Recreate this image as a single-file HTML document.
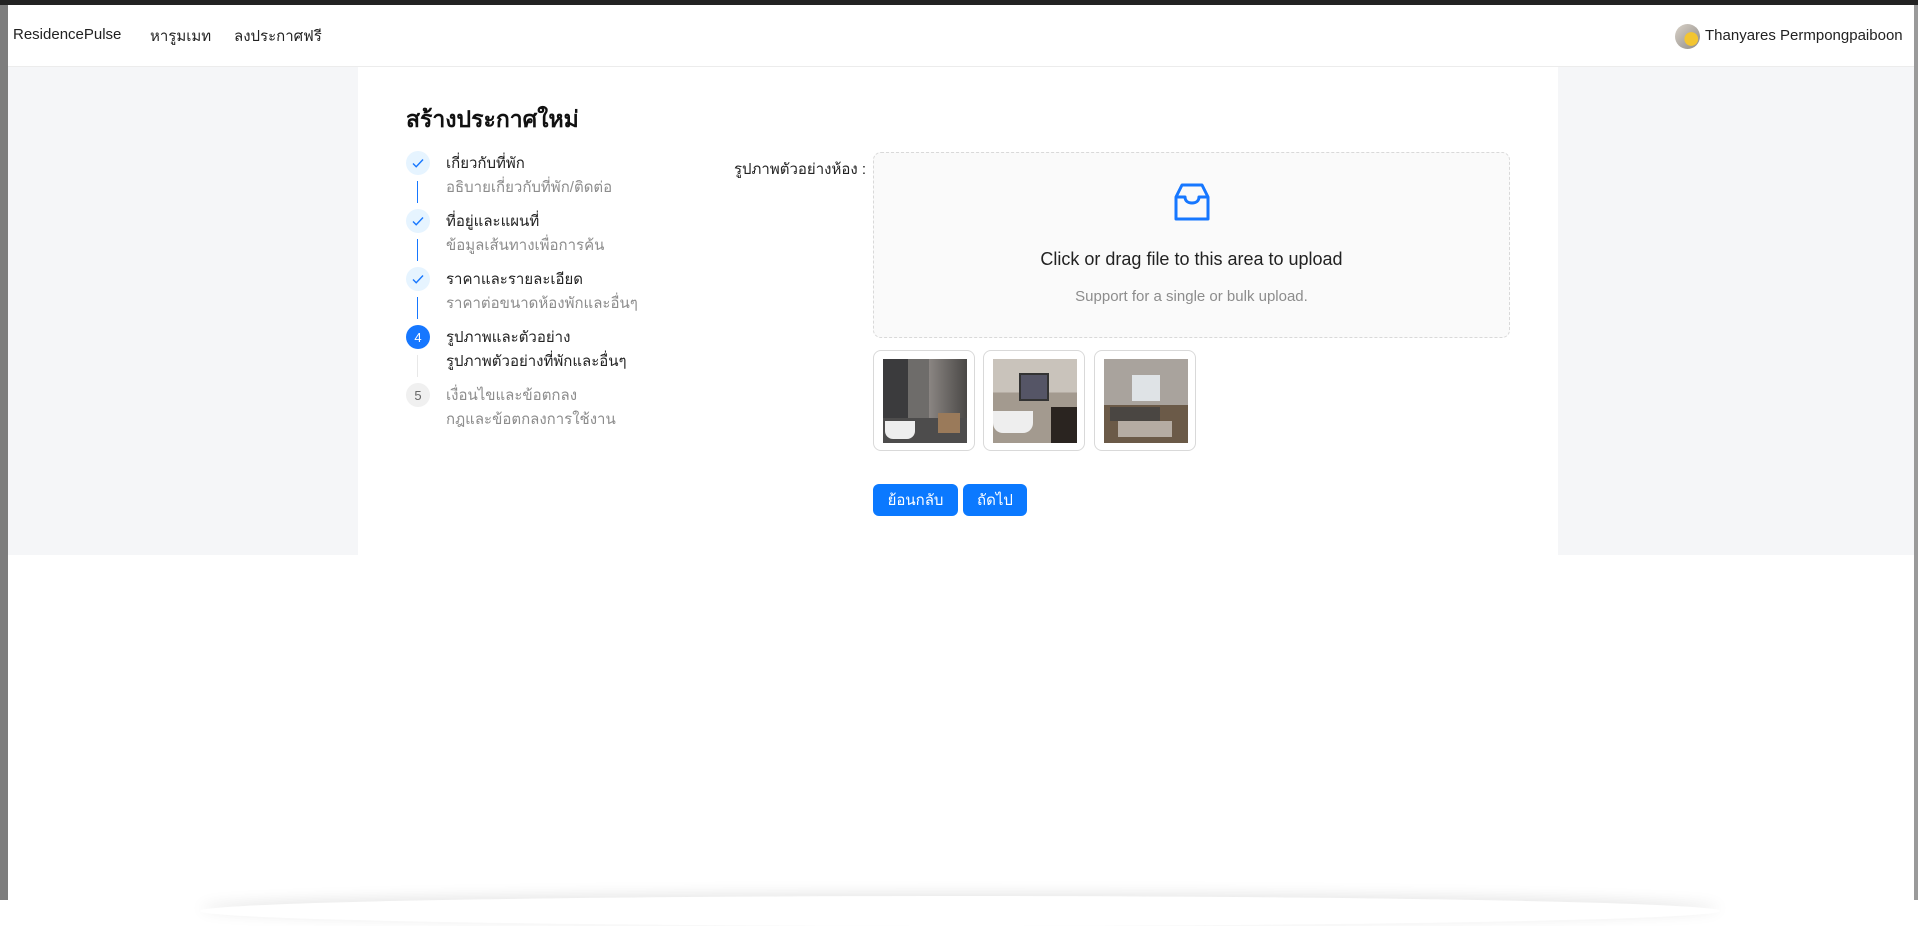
<!DOCTYPE html>
<html><head><meta charset="utf-8">
<style>
*{margin:0;padding:0;box-sizing:border-box}
html,body{width:1918px;height:900px;overflow:hidden;background:#fff;font-family:"Liberation Sans","DejaVu Sans",sans-serif;color:#222}
.topbar{position:absolute;left:0;top:0;width:1918px;height:5px;background:#222}
.lstrip{position:absolute;left:0;top:5px;width:8px;height:895px;background:#7d7d7d}
.rstrip{position:absolute;right:0;top:5px;width:4px;height:895px;background:#9a9a9a}
.header{position:absolute;left:8px;top:5px;right:4px;height:62px;background:#fff;border-bottom:1px solid #ececec}
.header span{position:absolute;top:22px;font-size:15px;color:#222}
.gray{position:absolute;left:8px;right:4px;top:67px;height:488px;background:#f5f6f8}
.panel{position:absolute;left:358px;top:67px;width:1200px;height:488px;background:#fff}
.title{position:absolute;left:406px;top:102px;font-size:23px;font-weight:bold;color:#111}
.step{position:absolute;left:406px}
.circ{position:absolute;left:0;top:0;width:24px;height:24px;border-radius:50%;display:flex;align-items:center;justify-content:center;font-size:13px}
.st{position:absolute;left:40px;top:0px;font-size:15px;white-space:nowrap;color:#222}
.ss{position:absolute;left:40px;top:24px;font-size:15px;white-space:nowrap;color:#8c8c8c}
.line{position:absolute;left:11px;top:30px;width:1px;height:22px;background:#1677ff}
.label{position:absolute;right:1052px;top:157px;font-size:15px;color:#222;white-space:nowrap}
.drop{position:absolute;left:873px;top:152px;width:637px;height:186px;background:#fafafa;border:1px dashed #d9d9d9;border-radius:8px;text-align:center}
.drop .t1{position:absolute;left:0;right:0;top:96px;font-size:18px;color:#222}
.drop .t2{position:absolute;left:0;right:0;top:135px;font-size:15px;color:#8c8c8c}
.thumb{position:absolute;top:350px;width:102px;height:101px;border:1px solid #d9d9d9;border-radius:8px;background:#fff}
.img{position:absolute;left:9px;top:8px;width:84px;height:84px;overflow:hidden}
.btn{position:absolute;top:484px;height:32px;background:#0b79ff;color:#fff;border-radius:6px;font-size:15px;display:flex;align-items:center;justify-content:center}
.shadow{position:absolute;left:200px;top:896px;width:1520px;height:30px;border-radius:50%;box-shadow:0 -3px 14px rgba(0,0,0,.10)}
</style></head><body>
<div class="topbar"></div>
<div class="header">
<span style="left:5px;top:21px">ResidencePulse</span>
<span style="left:142px;top:19px">หารูมเมท</span>
<span style="left:226px;top:19px">ลงประกาศฟรี</span>
<div style="position:absolute;left:1667px;top:19px;width:25px;height:25px;border-radius:50%;background:radial-gradient(circle at 65% 60%,#f3c531 0 30%,transparent 32%),linear-gradient(135deg,#d9d2c8,#8e8a86)"></div>
<span style="left:1697px;top:22px;font-size:15px">Thanyares Permpongpaiboon</span>
</div>
<div class="lstrip"></div><div class="rstrip"></div>
<div class="gray"></div>
<div class="panel"></div>
<div class="title">สร้างประกาศใหม่</div>

<div class="step" style="top:151px"><div class="circ" style="background:#e6f4ff"><svg width="14" height="14" viewBox="0 0 14 14"><path d="M2 7.5l3.2 3.2L12 3.5" fill="none" stroke="#1677ff" stroke-width="1.4"/></svg></div><div class="line"></div><div class="st">เกี่ยวกับที่พัก</div><div class="ss">อธิบายเกี่ยวกับที่พัก/ติดต่อ</div></div>
<div class="step" style="top:209px"><div class="circ" style="background:#e6f4ff"><svg width="14" height="14" viewBox="0 0 14 14"><path d="M2 7.5l3.2 3.2L12 3.5" fill="none" stroke="#1677ff" stroke-width="1.4"/></svg></div><div class="line"></div><div class="st">ที่อยู่และแผนที่</div><div class="ss">ข้อมูลเส้นทางเพื่อการค้น</div></div>
<div class="step" style="top:267px"><div class="circ" style="background:#e6f4ff"><svg width="14" height="14" viewBox="0 0 14 14"><path d="M2 7.5l3.2 3.2L12 3.5" fill="none" stroke="#1677ff" stroke-width="1.4"/></svg></div><div class="line"></div><div class="st">ราคาและรายละเอียด</div><div class="ss">ราคาต่อขนาดห้องพักและอื่นๆ</div></div>
<div class="step" style="top:325px"><div class="circ" style="background:#1677ff;color:#fff">4</div><div class="line" style="background:#e8e8e8"></div><div class="st">รูปภาพและตัวอย่าง</div><div class="ss" style="color:#222">รูปภาพตัวอย่างที่พักและอื่นๆ</div></div>
<div class="step" style="top:383px"><div class="circ" style="background:#f0f0f0;color:#666">5</div><div class="st" style="color:#8c8c8c">เงื่อนไขและข้อตกลง</div><div class="ss">กฎและข้อตกลงการใช้งาน</div></div>

<div class="label">รูปภาพตัวอย่างห้อง :</div>
<div class="drop">
<svg style="position:absolute;left:300px;top:30px" width="36" height="40" viewBox="0 0 36 40"><path d="M8 2h20l6 12v22H2V14z" fill="none" stroke="#1677ff" stroke-width="3" stroke-linejoin="round"/><path d="M2 14h9c0 4 3 6 7 6s7-2 7-6h9" fill="none" stroke="#1677ff" stroke-width="3" stroke-linejoin="round"/></svg>
<div class="t1">Click or drag file to this area to upload</div>
<div class="t2">Support for a single or bulk upload.</div>
</div>

<div class="thumb" style="left:873px"><div class="img" style="background:linear-gradient(90deg,#3b3b3d 0 30%,#6e6c6a 30% 55%,#8a8582 55%,#4a4846);"><div style="position:absolute;left:0;bottom:0;width:84px;height:25px;background:#4d4c4c"></div><div style="position:absolute;left:2px;bottom:4px;width:30px;height:18px;background:#eee;border-radius:0 0 8px 8px"></div><div style="position:absolute;left:55px;bottom:10px;width:22px;height:20px;background:#9a7a5a"></div></div></div>
<div class="thumb" style="left:983px"><div class="img" style="background:linear-gradient(180deg,#c9c3bb 0 40%,#a39a8f 40%);"><div style="position:absolute;left:26px;top:14px;width:30px;height:28px;background:#556;border:2px solid #333"></div><div style="position:absolute;left:0;bottom:10px;width:40px;height:22px;background:#eee;border-radius:0 0 10px 10px"></div><div style="position:absolute;right:0;bottom:0;width:26px;height:36px;background:#2a2420"></div></div></div>
<div class="thumb" style="left:1094px"><div class="img" style="background:linear-gradient(180deg,#a9a39d 0 55%,#6b5a48 55%);"><div style="position:absolute;left:28px;top:16px;width:28px;height:26px;background:#dfe3e6"></div><div style="position:absolute;left:6px;top:48px;width:50px;height:14px;background:#4a4642"></div><div style="position:absolute;left:14px;bottom:6px;width:54px;height:16px;background:#b5aca3"></div></div></div>

<div class="btn" style="left:873px;width:85px">ย้อนกลับ</div>
<div class="btn" style="left:963px;width:64px">ถัดไป</div>
<div class="shadow"></div>
</body></html>
